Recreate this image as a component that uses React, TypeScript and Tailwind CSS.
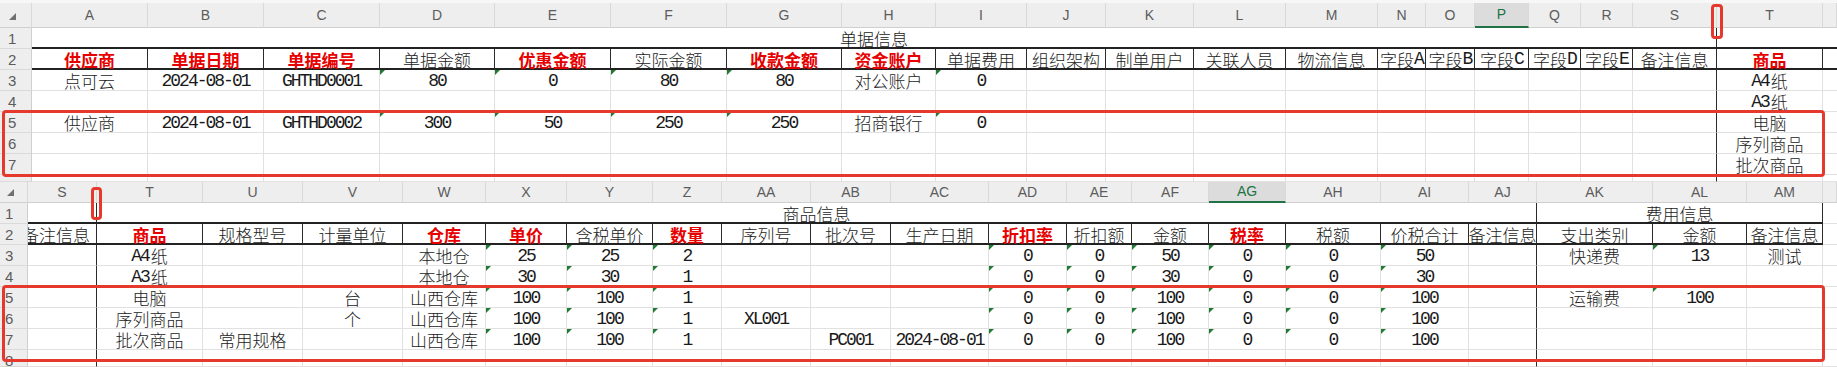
import React from 'react';

const CJK_RE = /[\u2e80-\u9fff\uff00-\uffef]/;

function Txt({ s }: { s: string }) {
  const runs: { t: string; c: boolean }[] = [];
  for (const ch of s) {
    const c = CJK_RE.test(ch);
    const last = runs[runs.length - 1];
    if (last && last.c === c) last.t += ch;
    else runs.push({ t: ch, c });
  }
  return (
    <>
      {runs.map((r, i) =>
        r.c ? (
          <span key={i} className="font-['Noto_Sans_CJK_SC',sans-serif] text-[17px]">
            {r.t}
          </span>
        ) : (
          <span
            key={i}
            className={`font-['Liberation_Mono',monospace] text-[18px] font-normal tracking-[-2px] ${
              i < runs.length - 1 ? 'mr-[2px]' : ''
            }`}
          >
            {r.t}
          </span>
        )
      )}
    </>
  );
}

function Corner() {
  return (
    <div className="relative border-b border-r border-b-[#cfcfcf] border-r-[#d9d9d9] bg-[#eeeeee]">
      <svg className="absolute bottom-[7px] right-[15px]" width="7" height="7" viewBox="0 0 7 7">
        <polygon points="7,0 7,7 0,7" fill="#707070" />
      </svg>
    </div>
  );
}

function CornerB() {
  return (
    <div className="relative border-b border-r border-b-[#cfcfcf] border-r-[#d9d9d9] bg-[#eeeeee]">
      <svg className="absolute bottom-[6px] left-[7px]" width="7" height="7" viewBox="0 0 7 7">
        <polygon points="7,0 7,7 0,7" fill="#707070" />
      </svg>
    </div>
  );
}

function ColHead({ label, active }: { label: string; active: boolean }) {
  return (
    <div
      className={`flex items-center justify-center border-r border-r-[#d9d9d9] font-['Liberation_Sans',sans-serif] text-[14px] ${
        active
          ? 'border-b-2 border-b-[#217346] bg-[#dcdcdc] text-[#217346]'
          : 'border-b border-b-[#cfcfcf] bg-[#eeeeee] text-[#5c5c5c]'
      }`}
    >
      {label}
    </div>
  );
}

function RowHead({ n, partial, pad }: { n: string; partial?: boolean; pad: 'top' | 'bottom' }) {
  return (
    <div
      className={`flex overflow-hidden border-b border-r border-b-[#dadada] border-r-[#cfcfcf] bg-[#eeeeee] font-['Liberation_Sans',sans-serif] text-[15px] leading-none text-[#5c5c5c] ${
        partial ? 'items-start pt-[3px]' : 'items-center'
      } ${pad === 'top' ? 'pl-[8px]' : 'pl-[5px]'}`}
    >
      {n}
    </div>
  );
}

function Tri() {
  return (
    <span className="absolute left-0 top-0 h-0 w-0 border-r-[5px] border-t-[5px] border-r-transparent border-t-[#1f7a34]" />
  );
}

function DataCell({ t, red, tri, cls }: { t?: string; red?: boolean; tri?: boolean; cls: string }) {
  return (
    <div
      className={`relative flex items-center justify-center whitespace-nowrap pt-[1px] leading-none ${
        red ? 'font-bold text-[#e60000]' : 'font-light text-[#1a1a1a]'
      } ${cls}`}
    >
      {tri && <Tri />}
      {t ? <Txt s={t} /> : null}
    </div>
  );
}

/* ---------------- TOP SHEET ---------------- */

const TOP_LETTERS = ['A', 'B', 'C', 'D', 'E', 'F', 'G', 'H', 'I', 'J', 'K', 'L', 'M', 'N', 'O', 'P', 'Q', 'R', 'S', 'T', 'U'];

const TOP_HEAD: [string, boolean][] = [
  ['供应商', true],
  ['单据日期', true],
  ['单据编号', true],
  ['单据金额', false],
  ['优惠金额', true],
  ['实际金额', false],
  ['收款金额', true],
  ['资金账户', true],
  ['单据费用', false],
  ['组织架构', false],
  ['制单用户', false],
  ['关联人员', false],
  ['物流信息', false],
  ['字段A', false],
  ['字段B', false],
  ['字段C', false],
  ['字段D', false],
  ['字段E', false],
  ['备注信息', false],
  ['商品', true],
  ['', false],
];

const TOP_DATA: Record<number, Record<string, string>> = {
  3: { A: '点可云', B: '2024-08-01', C: 'GHTHD0001', D: '80', E: '0', F: '80', G: '80', H: '对公账户', I: '0', T: 'A4纸' },
  4: { T: 'A3纸' },
  5: { A: '供应商', B: '2024-08-01', C: 'GHTHD0002', D: '300', E: '50', F: '250', G: '250', H: '招商银行', I: '0', T: '电脑' },
  6: { T: '序列商品' },
  7: { T: '批次商品' },
  8: {},
};

const TOP_TRI: Record<number, string[]> = {
  3: ['D', 'E', 'F', 'G', 'I'],
  5: ['D', 'E', 'F', 'G', 'I'],
};

function topBorders(r: number, i: number) {
  let right = '';
  if (i === 20) right = '';
  else if (i === 18) right = 'border-r border-r-[#2b2b2b]';
  else if (r === 2) right = 'border-r border-r-[#2b2b2b]';
  else right = 'border-r border-r-[#e1e1e1]';
  const bottom = r === 2 ? 'border-b-2 border-b-[#222222]' : 'border-b border-b-[#e1e1e1]';
  return `${right} ${bottom}`;
}

function TopSheet() {
  return (
    <div className="grid grid-cols-[32px_116px_116px_116px_115px_116px_116px_115px_94px_91px_79px_88px_92px_92px_48px_49px_54px_52px_52px_84px_106px_14px] grid-rows-[25px_21px_21px_21px_21px_21px_21px_21px_7px]">
      <Corner />
      {TOP_LETTERS.map((l, i) => (
        <ColHead key={'h' + l} label={i === 20 ? '' : l} active={l === 'P'} />
      ))}
      <RowHead n="1" pad="top" />
      <div className="col-span-19 flex items-center justify-center border-b-2 border-r border-b-[#222222] border-r-[#2b2b2b] pt-[1px] font-light leading-none text-[#1a1a1a]">
        <Txt s="单据信息" />
      </div>
      <div className="border-b-2 border-b-[#222222]" />
      <div className="border-b-2 border-b-[#222222]" />
      {[2, 3, 4, 5, 6, 7, 8].map((r) => (
        <React.Fragment key={'r' + r}>
          <RowHead n={String(r)} partial={r === 8} pad="top" />
          {TOP_LETTERS.map((l, i) => {
            const cls = topBorders(r, i);
            if (r === 2) {
              const [t, red] = TOP_HEAD[i];
              return <DataCell key={l + r} t={t} red={red} cls={cls} />;
            }
            const t = TOP_DATA[r]?.[l];
            const tri = (TOP_TRI[r] || []).includes(l);
            return <DataCell key={l + r} t={t} tri={tri} cls={cls} />;
          })}
        </React.Fragment>
      ))}
    </div>
  );
}

/* ---------------- BOTTOM SHEET ---------------- */

const BOT_LETTERS = ['S', 'T', 'U', 'V', 'W', 'X', 'Y', 'Z', 'AA', 'AB', 'AC', 'AD', 'AE', 'AF', 'AG', 'AH', 'AI', 'AJ', 'AK', 'AL', 'AM', 'AN'];

const BOT_HEAD: [string, boolean][] = [
  ['备注信息', false],
  ['商品', true],
  ['规格型号', false],
  ['计量单位', false],
  ['仓库', true],
  ['单价', true],
  ['含税单价', false],
  ['数量', true],
  ['序列号', false],
  ['批次号', false],
  ['生产日期', false],
  ['折扣率', true],
  ['折扣额', false],
  ['金额', false],
  ['税率', true],
  ['税额', false],
  ['价税合计', false],
  ['备注信息', false],
  ['支出类别', false],
  ['金额', false],
  ['备注信息', false],
  ['', false],
];

const BOT_DATA: Record<number, Record<string, string>> = {
  3: { T: 'A4纸', W: '本地仓', X: '25', Y: '25', Z: '2', AD: '0', AE: '0', AF: '50', AG: '0', AH: '0', AI: '50', AK: '快递费', AL: '13', AM: '测试' },
  4: { T: 'A3纸', W: '本地仓', X: '30', Y: '30', Z: '1', AD: '0', AE: '0', AF: '30', AG: '0', AH: '0', AI: '30' },
  5: { T: '电脑', V: '台', W: '山西仓库', X: '100', Y: '100', Z: '1', AD: '0', AE: '0', AF: '100', AG: '0', AH: '0', AI: '100', AK: '运输费', AL: '100' },
  6: { T: '序列商品', V: '个', W: '山西仓库', X: '100', Y: '100', Z: '1', AA: 'XL001', AD: '0', AE: '0', AF: '100', AG: '0', AH: '0', AI: '100' },
  7: { T: '批次商品', U: '常用规格', W: '山西仓库', X: '100', Y: '100', Z: '1', AB: 'PC001', AC: '2024-08-01', AD: '0', AE: '0', AF: '100', AG: '0', AH: '0', AI: '100' },
  8: {},
};

const ROW_TRI = ['X', 'Y', 'Z', 'AD', 'AE', 'AF', 'AG', 'AH', 'AI'];
const BOT_TRI: Record<number, string[]> = {
  3: [...ROW_TRI, 'AL'],
  4: ROW_TRI,
  5: [...ROW_TRI, 'AL'],
  6: ROW_TRI,
  7: ROW_TRI,
};

function botBorders(r: number, i: number) {
  let right = '';
  if (i === 21) right = '';
  else if (i === 0 || i === 17) right = 'border-r border-r-[#2b2b2b]';
  else if (r === 2) right = 'border-r border-r-[#2b2b2b]';
  else right = 'border-r border-r-[#e1e1e1]';
  const bottom = r === 2 && i !== 21 ? 'border-b-2 border-b-[#222222]' : 'border-b border-b-[#e1e1e1]';
  return `${right} ${bottom}`;
}

function BottomSheet() {
  return (
    <div className="grid grid-cols-[28px_69px_106px_100px_100px_83px_81px_86px_69px_89px_80px_98px_78px_65px_77px_77px_95px_88px_68px_116px_94px_76px_14px] grid-rows-[21px_21px_21px_21px_21px_21px_21px_21px_17px]">
      <CornerB />
      {BOT_LETTERS.map((l, i) => (
        <ColHead key={'h' + l} label={i === 21 ? '' : l} active={l === 'AG'} />
      ))}
      <RowHead n="1" pad="bottom" />
      <div className="border-b-2 border-r border-b-[#222222] border-r-[#2b2b2b]" />
      <div className="col-span-17 flex items-center justify-center border-b-2 border-r border-b-[#222222] border-r-[#2b2b2b] pt-[1px] font-light leading-none text-[#1a1a1a]">
        <Txt s="商品信息" />
      </div>
      <div className="col-span-3 flex items-center justify-center border-b-2 border-r border-b-[#222222] border-r-[#2b2b2b] pt-[1px] font-light leading-none text-[#1a1a1a]">
        <Txt s="费用信息" />
      </div>
      <div className="border-b border-b-[#e1e1e1]" />
      {[2, 3, 4, 5, 6, 7, 8].map((r) => (
        <React.Fragment key={'r' + r}>
          <RowHead n={String(r)} partial={r === 8} pad="bottom" />
          {BOT_LETTERS.map((l, i) => {
            const cls = botBorders(r, i);
            if (r === 2) {
              const [t, red] = BOT_HEAD[i];
              if (i === 0) {
                return (
                  <div
                    key={l + r}
                    className={`flex items-center justify-end overflow-hidden whitespace-nowrap pr-[6px] pt-[1px] font-light leading-none text-[#1a1a1a] ${cls}`}
                  >
                    <Txt s={t} />
                  </div>
                );
              }
              return <DataCell key={l + r} t={t} red={red} cls={cls} />;
            }
            const t = BOT_DATA[r]?.[l];
            const tri = (BOT_TRI[r] || []).includes(l);
            return <DataCell key={l + r} t={t} tri={tri} cls={cls} />;
          })}
        </React.Fragment>
      ))}
    </div>
  );
}

export default function App() {
  return (
    <div className="relative h-[367px] w-[1837px] overflow-hidden bg-white font-['Noto_Sans_CJK_SC',sans-serif]">
      <div className="h-[3px] bg-[#f7f7f7]" />
      <TopSheet />
      <BottomSheet />
      {/* annotation boxes */}
      <div className="pointer-events-none absolute left-[2px] top-[110px] h-[67px] w-[1823px] rounded-[4px] border-[3px] border-[#e5392e]" />
      <div className="pointer-events-none absolute left-[2px] top-[285px] h-[77px] w-[1823px] rounded-[4px] border-[3px] border-[#e5392e]" />
      <div className="pointer-events-none absolute left-[1711px] top-[4px] h-[35px] w-[12px] rounded-[4px] border-[3px] border-[#e5392e]" />
      <div className="pointer-events-none absolute left-[91px] top-[187px] h-[33px] w-[11px] rounded-[4px] border-[3px] border-[#e5392e]" />
    </div>
  );
}
